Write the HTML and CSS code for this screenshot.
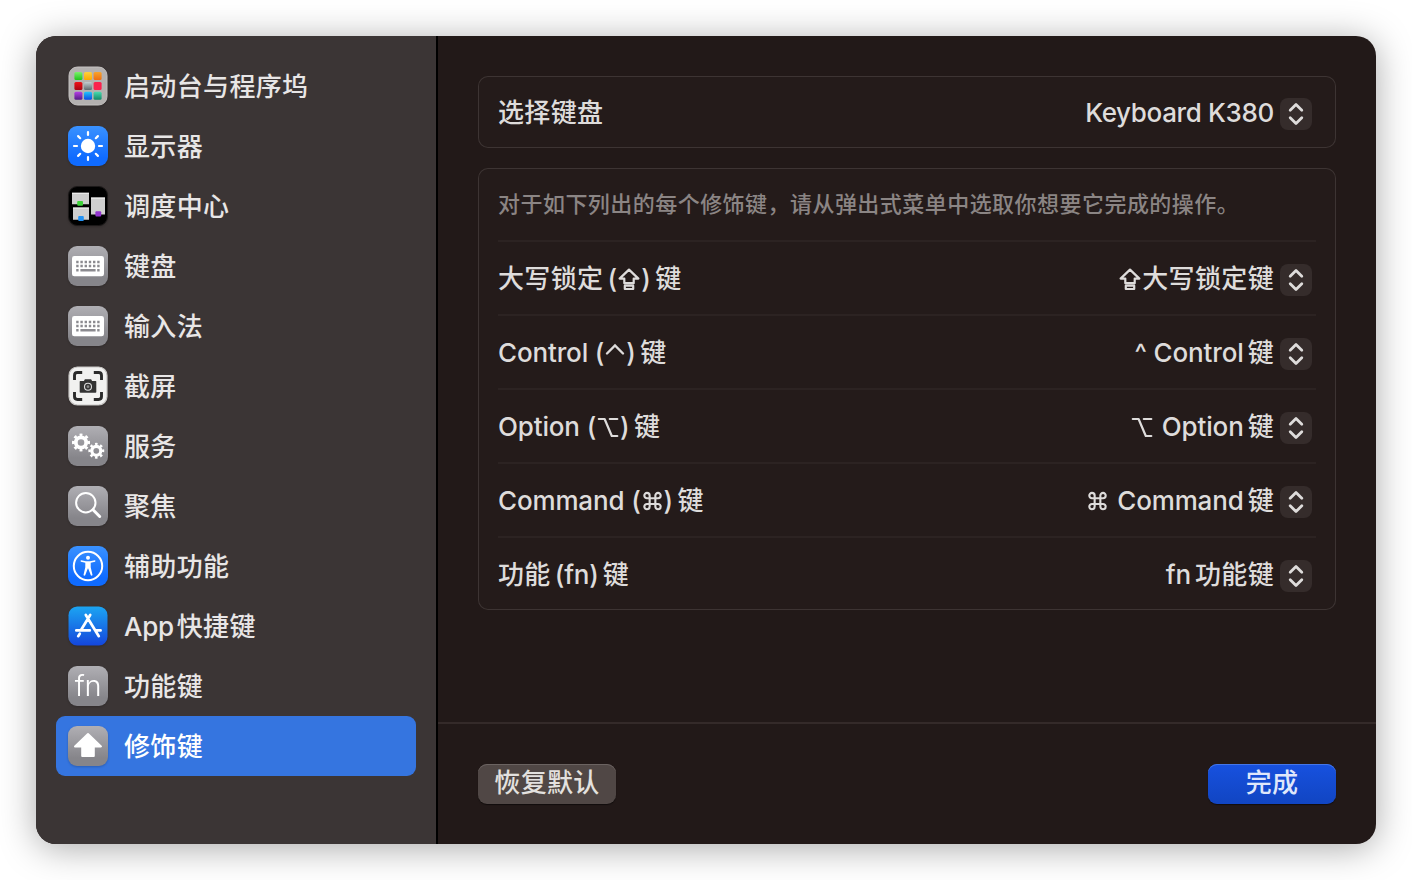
FILE: index.html
```html
<!DOCTYPE html>
<html lang="zh-CN">
<head>
<meta charset="utf-8">
<title>键盘快捷键</title>
<link rel="stylesheet" href="styles.css">
</head>
<body>
<svg class="defs" width="0" height="0" aria-hidden="true">
  <defs>
    <linearGradient id="gray" x2="0" y2="1"><stop offset="0" stop-color="#b0afb4"/><stop offset=".8" stop-color="#86858a"/></linearGradient>
    <linearGradient id="blue" x2="0" y2="1"><stop offset="0" stop-color="#3a92ff"/><stop offset=".8" stop-color="#0f6bff"/></linearGradient>
    <linearGradient id="store" x2="0" y2="1"><stop offset="0" stop-color="#1ca5f2"/><stop offset="1" stop-color="#1446dc"/></linearGradient>
    <linearGradient id="green" x2="0" y2="1"><stop offset="0" stop-color="#7df06c"/><stop offset="1" stop-color="#1fc51a"/></linearGradient>
    <linearGradient id="yellow" x2="0" y2="1"><stop offset="0" stop-color="#ffd23e"/><stop offset="1" stop-color="#fca800"/></linearGradient>
    <linearGradient id="orange" x2="0" y2="1"><stop offset="0" stop-color="#f7a42c"/><stop offset="1" stop-color="#ee6d12"/></linearGradient>
    <linearGradient id="red" x2="0" y2="1"><stop offset="0" stop-color="#f01218"/><stop offset="1" stop-color="#a80512"/></linearGradient>
    <linearGradient id="steel" x2="0" y2="1"><stop offset="0" stop-color="#c3ced1"/><stop offset="1" stop-color="#5f6b6f"/></linearGradient>
    <linearGradient id="purple" x2="0" y2="1"><stop offset="0" stop-color="#b63fe6"/><stop offset="1" stop-color="#551a86"/></linearGradient>
    <linearGradient id="sky" x2="0" y2="1"><stop offset="0" stop-color="#20c8fb"/><stop offset="1" stop-color="#0a4be4"/></linearGradient>
    <linearGradient id="teal" x2="0" y2="1"><stop offset="0" stop-color="#4adcb0"/><stop offset="1" stop-color="#128a68"/></linearGradient>
    <symbol id="keyboard" viewBox="0 0 40 40">
      <rect width="40" height="40" rx="9" fill="url(#gray)"/>
      <rect x="4" y="10" width="32" height="20.3" rx="2.4" fill="#fff"/>
      <g stroke="#8b8a8f" stroke-width="2.4">
        <path d="M8.2 16h24M8.2 20h24" stroke-dasharray="2.4 1.8"/>
        <path d="M8.2 24.2h2.4M12.4 24.2h15.2M29.2 24.2h2.4"/>
      </g>
    </symbol>
    <symbol id="chevrons" viewBox="0 0 32 32">
      <path d="M10.2 12.2l5.8-5.8 5.8 5.8M10.2 19.8l5.8 5.8 5.8-5.8" fill="none" stroke="#dedcdb" stroke-width="2.8" stroke-linecap="round" stroke-linejoin="round"/>
    </symbol>
    <symbol id="caps" viewBox="0 0 24 24">
      <path d="M12 2.6L21.4 11.6H16.7V16.2H7.3V11.6H2.6ZM7.8 18.7H16.2V22H7.8Z" fill="none" stroke="#dedcdb" stroke-width="2.2" stroke-linejoin="round"/>
    </symbol>
    <symbol id="option" viewBox="0 0 24 24">
      <path d="M2.8 4H8.6L15.8 21H21.3M13.8 4H21.3" fill="none" stroke="#dedcdb" stroke-width="2.2" stroke-linecap="round" stroke-linejoin="round"/>
    </symbol>
    <symbol id="command" viewBox="-.5 -.8 25 25">
      <path d="M8.9 8.7H15.1V14.9H8.9ZM8.9 8.7H6A2.9 2.9 0 1 1 8.9 5.8ZM15.1 8.7V5.8A2.9 2.9 0 1 1 18 8.7ZM8.9 14.9V17.8A2.9 2.9 0 1 1 6 14.9ZM15.1 14.9H18A2.9 2.9 0 1 1 15.1 17.8Z" fill="none" stroke="#dedcdb" stroke-width="2.3"/>
    </symbol>
  </defs>
</svg>
<div class="window">
  <nav class="sidebar">
    <div class="item">
      <svg class="icon" viewBox="0 0 40 40"><rect x="1" y="1" width="38" height="38" rx="8.4" fill="#b4b1b0" stroke="#c6c3c2"/>
        <rect x="6.4" y="6" width="8" height="8" rx="1.5" fill="url(#green)"/><rect x="16" y="6" width="8" height="8" rx="1.5" fill="url(#yellow)"/><rect x="25.6" y="6" width="8" height="8" rx="1.5" fill="url(#orange)"/>
        <rect x="6.4" y="16" width="8" height="8" rx="1.5" fill="url(#red)"/><rect x="16" y="16" width="8" height="8" rx="1.5" fill="url(#steel)"/><rect x="25.6" y="16" width="8" height="8" rx="1.5" fill="#fb214d"/>
        <rect x="6.4" y="25.7" width="8" height="8" rx="1.5" fill="url(#purple)"/><rect x="16" y="25.7" width="8" height="8" rx="1.5" fill="url(#sky)"/><rect x="25.6" y="25.7" width="8" height="8" rx="1.5" fill="url(#teal)"/></svg>
      <span class="name">启动台与程序坞</span>
    </div>
    <div class="item">
      <svg class="icon" viewBox="0 0 40 40"><rect width="40" height="40" rx="9" fill="url(#blue)"/><circle cx="20" cy="20" r="7.2" fill="#fff"/>
        <path d="M20 6v3M20 31v3M6 20h3M31 20h3M10.1 10.1l2.1 2.1M27.8 27.8l2.1 2.1M10.1 29.9l2.1-2.1M27.8 12.2l2.1-2.1" stroke="#fff" stroke-width="2.2" stroke-linecap="round"/></svg>
      <span class="name">显示器</span>
    </div>
    <div class="item">
      <svg class="icon" viewBox="0 0 40 40"><rect x=".5" y=".5" width="39" height="39" rx="8.7" fill="#000" stroke="#1c1919"/>
        <path d="M4 6.8h17v11.4H4zM5 21.6h16v12.2H5zM23 11.6h14v17H23z" fill="#cfcfcf"/><path d="M4 7.3h17M5 22.1h16M23 12.1h14" stroke="#f2f2f2"/>
        <rect x="9.2" y="15" width="5.8" height="4.8" rx="1" fill="#3ed339"/><rect x="10.2" y="30" width="5.6" height="5" rx="1" fill="#2492f3"/><rect x="27.4" y="25.2" width="5.8" height="5.4" rx="1" fill="#9334cf"/></svg>
      <span class="name">调度中心</span>
    </div>
    <div class="item"><svg class="icon"><use href="#keyboard"/></svg><span class="name">键盘</span></div>
    <div class="item"><svg class="icon"><use href="#keyboard"/></svg><span class="name">输入法</span></div>
    <div class="item">
      <svg class="icon" viewBox="0 0 40 40"><rect x="1" y="1" width="38" height="38" rx="8.4" fill="#f1f1f0" stroke="#c9c7c5" stroke-width="1.2"/>
        <path d="M6.5 14V9.4Q6.5 6.5 9.4 6.5H14.2M25.8 6.5h4.8q2.9 0 2.9 2.9V14M33.5 26v4.6q0 2.9-2.9 2.9H25.8M14.2 33.5H9.4q-2.9 0-2.9-2.9V26" fill="none" stroke="#2b2b2b" stroke-width="2.9"/>
        <path d="M12.3 15h3.6l1-1.7h6.2l1 1.7h3.6q.6 0 .6.6V26q0 .8-.8.8h-15q-.8 0-.8-.8V15.6q0-.6.6-.6z" fill="#333"/><circle cx="20" cy="20.7" r="3.5" fill="#333" stroke="#ddd" stroke-width="1.1"/><circle cx="20" cy="20.7" r="1.4" fill="#888"/></svg>
      <span class="name">截屏</span>
    </div>
    <div class="item">
      <svg class="icon" viewBox="0 0 40 40"><rect width="40" height="40" rx="9" fill="url(#gray)"/>
        <g fill="none" stroke="#fff"><circle cx="13" cy="16.5" r="5.2" stroke-width="3.8"/><circle cx="13" cy="16.5" r="7.7" stroke-width="2.6" pathLength="80" stroke-dasharray="4.8 5.2" stroke-dashoffset="2.4"/>
        <circle cx="28.3" cy="24.8" r="4.5" stroke-width="3.2"/><circle cx="28.3" cy="24.8" r="6.7" stroke-width="2.5" pathLength="80" stroke-dasharray="4.8 5.2" stroke-dashoffset="2.4"/></g></svg>
      <span class="name">服务</span>
    </div>
    <div class="item">
      <svg class="icon" viewBox="0 0 40 40"><rect width="40" height="40" rx="9" fill="url(#gray)"/><g fill="none" stroke="#fff" stroke-linecap="round"><circle cx="17.8" cy="16.7" r="9.7" stroke-width="2"/><path d="M25 23.8l6.7 6.7" stroke-width="3"/></g></svg>
      <span class="name">聚焦</span>
    </div>
    <div class="item">
      <svg class="icon" viewBox="0 0 40 40"><rect width="40" height="40" rx="9" fill="url(#blue)"/><circle cx="20" cy="20" r="14.2" fill="none" stroke="#fff" stroke-width="2"/><circle cx="20" cy="11.7" r="2" fill="#fff"/>
        <path d="M13.2 14.3L18 15.2h4l4.8-.9q1.3.4.3 1.5l-4.4 1v4.4l1.8 7.7q-.6 1.4-1.7.3L20.2 22.6h-.4L17.2 29.2q-1.1 1.1-1.7-.3l1.8-7.7v-4.4l-4.4-1q-1-1.1.3-1.5z" fill="#fff"/></svg>
      <span class="name">辅助功能</span>
    </div>
    <div class="item">
      <svg class="icon" viewBox="0 0 40 40"><rect x=".5" y=".5" width="39" height="39" rx="8.7" fill="url(#store)"/>
        <path d="M17.8 9L30.8 30.2M22.2 9L13.2 23.8M11.8 27.7L10.2 30.2M8.3 24.4H21.8M28.4 24.4H32.6" fill="none" stroke="#fff" stroke-width="2.7" stroke-linecap="round"/></svg>
      <span class="name"><span class="app">App</span>快捷键</span>
    </div>
    <div class="item"><div class="icon fn">fn</div><span class="name">功能键</span></div>
    <div class="item selected">
      <svg class="icon" viewBox="0 0 40 40"><rect width="40" height="40" rx="9" fill="url(#gray)"/><path d="M20 8L33 20.4H25.8V30H14.2V20.4H7Z" fill="#fff" stroke="#fff" stroke-width="2" stroke-linejoin="round"/></svg>
      <span class="name">修饰键</span>
    </div>
  </nav>
  <main class="content">
    <div class="groups">
      <section class="panel">
        <div class="row"><span class="label">选择键盘</span><span class="value"><span class="latin kb">Keyboard K380</span></span><svg class="stepper"><use href="#chevrons"/></svg></div>
      </section>
      <section class="panel">
        <div class="row note">对于如下列出的每个修饰键，请从弹出式菜单中选取你想要它完成的操作。</div>
        <div class="row"><span class="label">大写锁定<span class="paren">(</span><svg class="sym"><use href="#caps"/></svg><span>)</span><span class="han">键</span></span><span class="value"><svg class="sym"><use href="#caps"/></svg>大写锁定键</span><svg class="stepper"><use href="#chevrons"/></svg></div>
        <div class="row"><span class="label"><span class="latin">Control (</span><svg class="sym ctl" viewBox="0 0 22 24"><path d="M3 12.5l8-8 8 8" fill="none" stroke="#dedcdb" stroke-width="2.4" stroke-linecap="round"/></svg><span>)</span><span class="han">键</span></span><span class="value"><span class="latin">^ Control</span><span class="han">键</span></span><svg class="stepper"><use href="#chevrons"/></svg></div>
        <div class="row"><span class="label"><span class="latin">Option (</span><svg class="sym"><use href="#option"/></svg><span>)</span><span class="han">键</span></span><span class="value"><svg class="sym"><use href="#option"/></svg><span class="latin gap">Option</span><span class="han">键</span></span><svg class="stepper"><use href="#chevrons"/></svg></div>
        <div class="row"><span class="label"><span class="latin">Command (</span><svg class="sym cmd"><use href="#command"/></svg><span>)</span><span class="han">键</span></span><span class="value"><svg class="sym cmd"><use href="#command"/></svg><span class="latin gap">Command</span><span class="han">键</span></span><svg class="stepper"><use href="#chevrons"/></svg></div>
        <div class="row"><span class="label">功能<span class="paren latin">(fn)</span><span class="han">键</span></span><span class="value"><span class="latin">fn</span><span class="han">功能键</span></span><svg class="stepper"><use href="#chevrons"/></svg></div>
      </section>
    </div>
    <footer class="footer">
      <button class="btn">恢复默认</button>
      <button class="btn primary">完成</button>
    </footer>
  </main>
</div>
</body>
</html>
```
FILE: styles.css
```css
* { box-sizing: border-box; }
body { margin: 0; padding: 36px; width: 1412px; height: 880px; background: #fff; overflow: hidden; font: 450 26px/36px Inter, "Noto Sans CJK SC", sans-serif; letter-spacing: .35px; color: #dedcdb; }
.defs { position: absolute; }
.window { display: flex; width: 1340px; height: 808px; border-radius: 20px; overflow: hidden; background: #221918; box-shadow: 0 4px 36px rgba(0,0,0,.34); }
.sidebar { width: 402px; padding: 20px; background: #3b3535; border-right: 2px solid #000; color: #e8e6e6; }
.item { display: flex; align-items: center; gap: 16px; height: 60px; padding: 0 12px; border-radius: 9px; white-space: nowrap; }
.name { padding-top: 2px; }
.selected { background: #3575e0; color: #fff; font-weight: 500; }
.icon { width: 40px; height: 40px; flex: none; filter: drop-shadow(0 1px 1px rgba(0,0,0,.2)); }
.fn { border-radius: 9px; background: linear-gradient(#b0afb4, #86858a 80%); color: #fff; font-size: 29px; line-height: 40px; font-weight: 350; letter-spacing: -.4px; text-align: center; }
.app { margin-right: 3px; letter-spacing: -.3px; }
.content { flex: 1; display: flex; flex-direction: column; }
.groups { flex: 1; display: flex; flex-direction: column; gap: 20px; padding: 40px 40px 0; }
.panel { padding: 0 20px; border-radius: 10px; background: #241b1a; box-shadow: inset 0 0 0 1px #3d3433; }
.row { display: flex; align-items: center; height: 74px; border-bottom: 2px solid #2c2322; white-space: nowrap; }
.row:last-child { height: 72px; border-bottom: 0; }
.note { font-size: 22px; letter-spacing: .46px; color: #8b8584; }
.label, .value { display: flex; align-items: center; padding-top: 2px; }
.value { margin-left: auto; }
.latin { white-space: pre; letter-spacing: -.15px; }
.kb { letter-spacing: -.35px; }
.han { margin-left: 4px; }
.paren { margin-left: 4px; }
.gap { margin-left: 8px; }
.sym { width: 24px; height: 24px; }
.ctl { width: 22px; }
.cmd { width: 23px; }
.stepper { width: 32px; height: 32px; margin: 4px 4px 0 6px; border-radius: 8px; background: #352c2b; }
.footer { display: flex; justify-content: space-between; align-items: flex-start; height: 122px; padding: 40px 40px 0; border-top: 2px solid #342a29; }
.btn { height: 40px; width: 138px; padding: 0 0 2px; border: 0; border-radius: 9px; background: #504745; box-shadow: inset 0 1px #6b6361, 0 1px 1px rgba(0,0,0,.5); font: inherit; letter-spacing: .35px; color: #e3e1df; }
.primary { width: 128px; background: linear-gradient(#1751df, #1145c2); box-shadow: inset 0 1px #4476e8, 0 1px 1px rgba(0,0,0,.5); color: #dfe7fb; }
```
